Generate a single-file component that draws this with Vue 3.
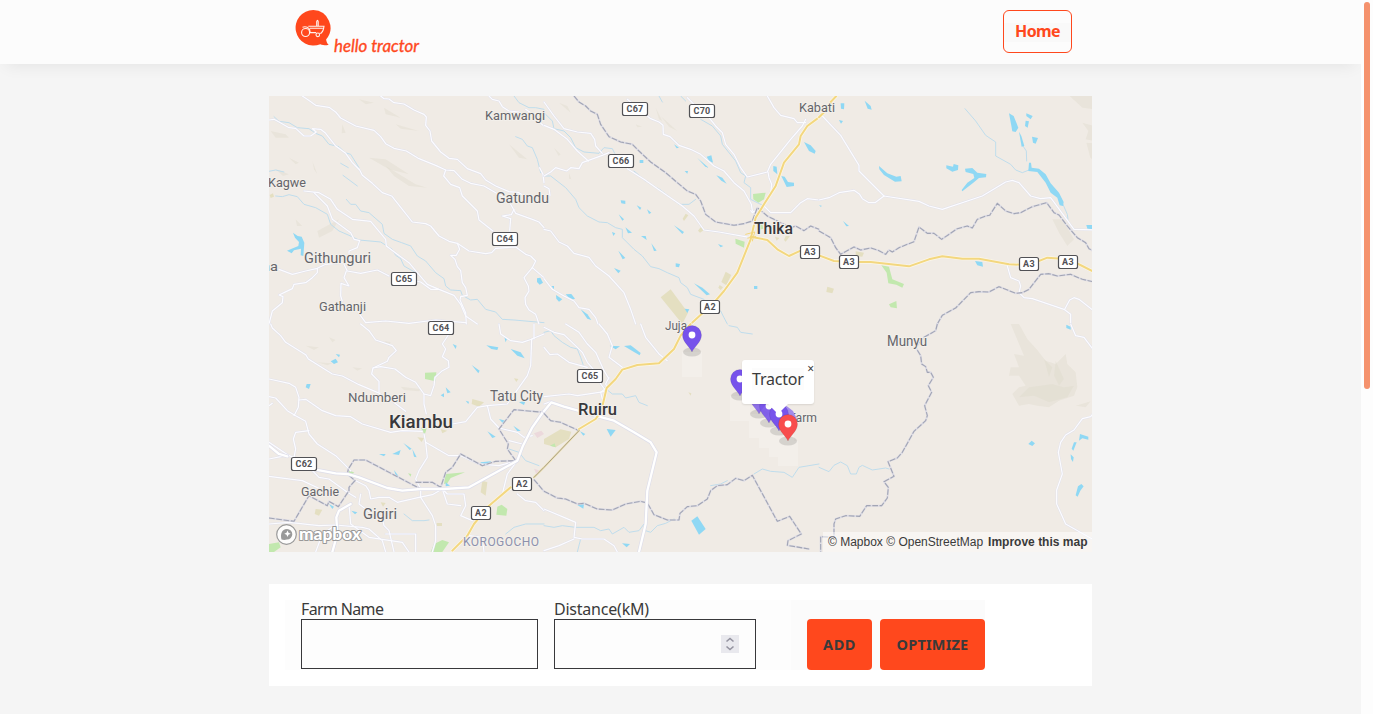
<script setup>
import { ref } from 'vue'

const farm = ref('')
const distance = ref('')

// The map is divided into six tiles; coordinates are local to each tile.
const tiles = [
  {
    x: 0, y: 0,
    roads: [
      '100,0 118,12 140,28 180,34 200,48 215,66 260,90 315,103 335,122 350,143 375,157 412,165 450,188 500,208 530,222 555,224 580,250 605,262 645,270 680,290 720,310',
      '335,0 345,8 360,9 375,20 405,24 435,42 465,55 472,63 470,88 483,105 488,135 515,168 540,187 565,190 595,218 635,233 650,252 680,270 720,287 750,290 765,300',
      '0,72 15,70 30,78 60,95 80,97 105,120 125,120 142,108 130,98 155,100 170,112 200,150 230,172 250,200 272,222 280,238 310,262 340,290 368,300 400,340 430,378 470,383 485,390 510,420 540,436 565,442 600,465 650,473 668,470 680,457 740,453 770,475 785,480 800,495',
      '530,222 524,240 545,265 572,275 580,300 625,345 630,372 672,405',
      '105,285 150,290 185,310 205,340 250,370 305,376 325,400 350,430 352,450 385,475 420,500 445,530 475,565 510,580 555,598 575,625 590,660 625,684',
      '135,290 175,330 190,370 245,410 255,430 272,434 265,455 240,465 240,472',
      '30,520 70,535 110,525 145,517 170,505 225,500', '225,505 235,525 275,532 325,522 360,540',
      '440,555 455,558 485,580 510,580', '232,525 225,545 240,570 216,562 215,600 220,615',
      '145,517 145,530 130,545 110,560 75,565 70,578 45,590 30,597 42,602 40,620 10,645 0,684',
      '268,650 290,680 350,675 420,682 500,672 590,680',
      '565,442 572,460 562,478 545,478 558,490 565,512 575,524 580,560 590,575 595,598 575,602 573,612 590,650 592,684',
      '725,325 740,352 790,370 810,378 825,395', '725,368 700,360 727,356 735,340', '725,368 722,405',
      '800,495 790,515 765,545 778,570 780,585 768,605 770,625 780,642 800,655 810,684', '790,515 825,545',
      '660,0 670,10 690,15 700,32 720,45 750,48', '770,40 800,60 810,78 825,90', '812,215 822,235 825,260'
    ],
    streams: [
      '15,62 30,76 60,80 85,95 120,98 140,112 160,120 180,145 210,152 228,170 245,175 270,215', '0,226 20,222 45,228', '215,202 238,215', '222,238 265,270',
      '20,300 40,302 60,296 85,302 105,325 140,335 175,355 185,385 210,405 240,418 270,432 335,438 370,460 380,478 395,488 405,510 440,530',
      '232,310 245,325 260,325 275,345 300,350 340,385 345,412 370,430 398,440 425,450 445,480 470,495 500,530 525,548 530,570 545,582 575,584 580,598 605,612 625,610 650,640 680,648 700,670 735,672 825,680',
      '740,122 760,130 775,150 790,155 805,190 815,230', '735,0 750,20 780,35 800,35 825,40'
    ],
    borders: [], yellow: [], trunk: [],
    water: ['72,410 86,420 98,422 106,440 103,480 95,478 96,458 75,463 68,472 54,464 68,458 88,450 90,438 78,425', '804,547 814,545 822,560 812,566 804,558'],
    green: [], sand: ['2,297 12,292 15,302 5,306'],
    hills: ['5,105 50,115 60,125 20,125', '20,220 60,235 42,240', '130,195 145,235 135,220', '300,185 350,190 420,235 360,220', '350,210 440,265 475,275 420,270 375,240', '345,35 395,65 350,55', '380,85 450,105 395,98', '720,145 775,190 750,185', '145,405 210,370 190,405 150,425', '220,85 230,110 218,112', '270,10 315,20 290,25', '60,185 90,200 80,205', '80,370 100,390 84,390']
  },
  {
    x: 825, y: 0,
    roads: [
      '0,18 30,60 60,98 100,108 140,112 152,130 155,150 175,172', '0,88 30,100 70,130 100,165 133,195', '0,240 20,228 35,215 68,225 80,215 105,218 115,200 175,178 195,170', '0,270 15,278 18,298',
      '250,10 280,35 320,68 345,78 357,88 358,115 378,122 405,148 440,160 470,175 510,210 540,225 570,260 600,285 622,325 625,344 635,350',
      '430,5 450,25', '495,65 515,90 535,110 545,145 570,175 590,215 610,243 670,228 680,205 740,130 775,90 785,70', '670,0 690,35 710,58 750,68 760,80 785,80', '672,228 675,245 683,265 680,290',
      '250,218 300,250 350,285 415,330 450,360 480,402 525,408 620,425', '660,330 680,350 740,350 770,320 790,308 825,312',
      '0,400 20,405 45,438 70,450 90,472 135,484 155,510 195,540 240,590 260,640 275,684', '0,548 25,580 60,600 90,615 105,635 135,640 155,665 162,684', '640,340 625,350 620,344'
    ],
    streams: ['0,50 25,75 30,98 60,105 80,125 95,155 120,168 165,172 180,155 205,158 212,172', '0,240 20,240 65,275 95,310 105,335 130,360 165,378 190,380 215,395 235,400 235,425 270,460 295,480 320,512 345,518 370,530 405,545 410,560 430,575 440,595 480,610', '410,0 425,15', '470,70 505,90 530,120 535,145 575,195 590,230 605,240 600,260 620,275 620,310 660,330', '270,225 305,255 350,282 405,325 435,325 455,310', '530,645 540,665 550,684', '345,0 355,18'],
    borders: ['90,0 105,18 125,30 140,45 160,55 170,85 195,122 230,138 265,145 285,165 320,198 365,230 400,260 430,285 455,295 470,315 485,355 515,378 570,388 600,383 625,375 640,335 670,360 690,370 740,395 755,390 780,404 800,390 825,400'],
    yellow: ['825,64 790,90 770,120 765,145 720,200 695,270 660,325 635,365 620,430 580,530 540,585 505,625 440,684', '620,422 670,432 700,460 735,480 770,464'], trunk: [],
    water: ['390,145 405,155 398,157', '488,182 502,178 507,200 495,195', '460,186 494,215 484,212', '517,238 535,245 548,263 532,254', '422,225 432,225 430,233', '287,192 298,192 298,201 287,201', '780,138 800,148 815,165 812,173 795,165', '688,210 698,212 700,235 688,225', '712,240 722,242 732,258 750,260 750,270 728,273', '762,275 780,283', '788,292 800,298', '230,313 244,314 244,324 232,322', '278,328 292,335 288,342', '309,340 322,350 315,354', '224,355 240,370 235,374', '244,394 264,410 252,412', '291,420 305,420 308,432', '322,442 338,464 330,465', '390,388 420,408 415,414', '204,408 214,412 208,420', '223,464 244,486 236,490', '210,516 230,524 223,532', '395,502 408,504 405,514 395,512', '522,444 538,450 530,454', '450,562 475,575 498,595 488,598', '630,570 640,570 640,579 630,579', '65,595 82,594 93,608 80,612', '36,597 55,610 45,617 37,608', '110,640 130,655 142,672 130,668', '22,570 30,570 30,580', '422,638 436,640 430,651'],
    green: ['627,294 665,290 660,310 643,320 628,310', '574,428 602,437 600,455 575,443', '640,380 655,384 658,398 642,402'],
    sand: ['380,580 432,650 415,684 350,604', '545,527 562,537 547,568 532,558', '425,353 433,358 420,375 416,368', '470,394 480,402 468,410 462,404', '725,420 738,420 725,437 720,432', '693,422 706,426 698,434', '527,567 537,574 530,582 523,575'],
    hills: ['45,20 70,30 80,50', '335,35 355,75 345,70', '350,60 400,105 375,92', '30,155 50,175 44,180', '275,85 294,92 280,94', '75,230 82,250 75,248']
  },
  {
    x: 1650, y: 0,
    roads: ['10,60 65,118 120,208 120,225 195,300', '0,312 30,305 60,290 105,283 122,295 130,308 150,320 168,320 195,300 300,316 330,330 370,340 490,300 560,258 580,253 600,260 635,300 665,308 695,305 765,400 825,402', '565,510 575,545 600,555 605,570 600,590 615,605 640,608 735,640 755,655 755,684', '737,640 752,612 765,605 780,610 825,645'],
    streams: ['438,38 470,75 500,118 530,138 530,180 575,205 590,222 610,230 630,222', '612,150 622,165 623,195', '732,325 745,355 747,370'],
    borders: ['0,405 35,425 50,455 65,475 105,453 125,462 155,456 180,464 200,475 210,462 220,468 240,455 285,437 300,393 325,412 345,412 368,430 415,398 445,390 460,396 475,370 500,360 512,358 535,322 560,345 585,353 605,350 640,332 683,320 705,350 720,357 745,390 775,425 800,440 810,458 825,466', '355,684 370,658 410,636 455,590 480,587 510,588 540,572 590,592 610,590 630,580 665,535 690,533 715,540 755,535 790,550 825,558'],
    yellow: ['52,0 35,18 35,30 0,64', '0,478 45,495 100,498 155,498 270,511 330,490 370,481 430,488 480,488 570,505 630,507 685,485 750,490 790,510 820,525'], trunk: [],
    water: ['65,22 76,22 75,40 66,38', '137,14 155,30 158,41 146,38', '60,72 72,75 66,83', '180,210 205,232 232,242 245,240 248,256 228,257 195,237 181,220', '382,208 402,212 404,204 418,208 417,222 400,227 382,217', '438,218 460,216 475,230 502,234 501,244 480,246 463,260 430,286 428,282 445,260 466,246 463,234 440,228', '570,52 584,60 598,95 590,108 580,106', '600,107 607,120 616,150 608,152', '622,52 641,60 635,70 622,60', '620,74 630,76 626,95 618,90', '639,122 657,126 650,143 642,140', '630,200 636,200 638,215 660,218 680,235 695,262 720,290 734,318 732,330 722,328 715,305 695,290 680,260 655,228 628,225', '468,495 490,498 492,512 475,508', '72,375 90,390 82,391', '0,328 8,329 6,333', '802,387 825,387 825,400 805,398'],
    green: ['187,508 210,512 220,550 255,564 250,575 232,566 208,562 203,530', '210,625 232,615 234,637 215,634'], sand: ['110,466 135,470 130,482 110,480', '25,572 45,578 40,592 22,588'],
    hills: ['752,0 825,0 825,40 790,35', '790,80 825,90 825,135 800,130 808,105', '700,370 730,370 765,430 745,450 720,410', '802,140 825,142 825,195 814,185']
  },
  {
    x: 0, y: 684,
    roads: [
      '5,0 10,12 35,35 50,55 110,92 118,105 190,150 220,156 270,182 325,205 370,232 410,262', '275,0 300,20 320,48 370,65 382,80 360,100 355,112 312,132 308,150 330,172 330,205', '312,132 335,128 378,135 410,160 440,175 465,210 485,215 495,185 498,160 520,140 540,130 538,110 520,98 530,75 520,60 540,30',
      '465,210 465,240 472,270', '0,165 60,178 80,190 90,220 88,250 75,275', '90,228 110,226 160,260 200,275 245,278 280,300 365,325 400,320 460,322', '0,218 20,222 55,260 80,275 110,292 120,330 145,360 200,395 245,440', '0,245 10,238', '120,320 80,325 73,345 80,375 75,400', '0,355 60,395 90,405', '0,405 50,395', '465,330 470,355 475,400 450,440 440,465 455,495 455,520 490,575 500,605 500,650 490,684', '470,355 540,395 575,395 630,420 690,425 745,410',
      '550,300 590,293 625,250 655,245 715,240 750,190 775,155 785,125 788,45 825,30', '690,0 695,30 725,50 760,55 790,45', '795,0 795,45', '655,245 665,285 690,312 745,325 765,340 790,335',
      '0,457 100,470 175,505 210,510', '130,440 150,460 180,465 235,505 260,520', '260,470 290,485 300,500 305,525 330,520 360,520 385,535 450,520 490,512 520,495', '275,510 270,540 310,570 340,580 345,605 360,620 375,684', '520,495 535,510 585,510 590,545 575,575 610,590', '520,495 535,540 575,545', '745,410 715,450 700,510', '745,510 770,530 800,535 825,560', '0,600 60,595 150,605 200,603 280,610 300,615 340,650 350,684', '190,610 160,630 140,684', '350,630 440,630 440,684', '240,540 245,600 300,640 400,655 420,684', '600,635 640,640 645,684', '720,350 760,360'
    ],
    streams: ['405,570 430,590 465,590 480,588', '720,375 750,385 770,410 810,425', '710,630 735,610 770,600 825,600'],
    borders: ['0,582 75,592 120,515 175,545 180,532 208,548 240,500 240,490 258,470 235,450 238,435 255,408 290,408 455,495', '440,475 490,475 515,490 530,445 550,430 575,390 640,425 680,412 740,410 715,375 718,360 690,315 735,257 825,265', '795,467 825,502'],
    yellow: ['725,490 660,545 615,600 595,635 550,680'], trunk: ['0,365 30,390 55,397', '140,437 200,448 235,450 270,460 355,492 400,500 455,495 525,495 600,490 745,410 762,365 790,310 825,260', '245,540 210,560 202,580 205,630 190,684'],
    water: ['200,90 213,92 210,100', '185,112 200,104 207,115 195,120', '113,180 125,180 120,195 110,190', '551,60 563,65 560,75', '652,64 688,70 685,78 667,75', '725,75 755,85 767,103 745,95', '608,123 632,140 628,148', '530,190 545,205 535,208', '515,214 525,208 525,220', '590,230 600,233 598,240', '750,235 770,230 765,243', '655,322 680,338 670,342', '733,305 755,320 745,322', '690,285 710,290 700,296', '330,390 350,390 345,397', '370,390 395,378 390,393', '403,357 428,374 422,378', '430,375 443,400 435,398', '634,415 666,412 660,424 640,424', '375,438 388,455 382,460', '530,475 543,485 530,487', '180,540 195,548 190,555', '247,560 265,565 258,571', '780,193 790,200', '705,35 715,42 710,55'],
    green: ['468,146 502,145 500,172 468,165', '455,310 473,313 467,333', '530,450 588,445 545,462 535,478 525,480', '685,548 698,542 715,555 712,575 682,572', '0,660 30,655 35,670 15,684 0,684', '495,660 520,648 540,655 520,684 485,684', '417,448 427,450 425,458', '240,438 256,446 250,450 240,446'],
    sand: ['610,225 645,235 630,248 608,240', '445,340 465,342 458,354', '640,470 655,475 650,515 635,505', '515,315 535,320 520,328', '140,555 160,557 150,575 137,570', '503,597 519,597 519,606 503,606', '335,535 350,537 342,548', '735,163 748,165 742,174'],
    hills: ['110,65 150,70 135,78', '145,115 190,118 175,124', '395,188 455,195 450,202 405,198', '250,130 280,133 265,140', '180,40 200,48 190,55', '345,50 365,55 360,65']
  },
  {
    x: 825, y: 684,
    roads: ['0,10 30,25 60,32 100,70 115,85 130,115 160,150 170,180 185,200', '0,70 18,92 40,90 75,115 130,130', '65,0 105,25 130,60 155,85 180,140 195,165', '165,0 190,30 205,65 195,100 235,130', '290,0 305,40 345,90 370,110', '0,218 75,210 100,215 180,203', '195,160 185,180 190,190 170,205 175,225', '0,555 60,580 95,595 90,640 115,645 180,645 210,665 220,684', '90,645 45,665 0,680', '0,240 22,232'],
    streams: ['0,25 20,20 30,35 55,55 80,70 100,75 110,100 120,130', '0,605 30,610 55,605 95,610 150,610 170,620 195,615 205,630 240,610 255,625 285,620 300,600 305,620 320,625 340,605 365,598 390,585', '180,190 205,210 235,210 245,222 275,215 285,235 310,245', '630,450 655,435 680,442 720,445 745,460 765,430 795,425 825,420', '555,5 580,10 590,25 625,30', '110,645 100,684', '500,485 530,480 550,470'],
    borders: ['0,268 20,290 50,295 105,320', '0,502 40,522 65,525 100,540 120,538 160,555 205,558 245,540 290,532 310,537 330,572 370,588 405,588 408,568 430,548 460,545 490,525 500,500 520,485 550,482 575,463 600,470 625,454 700,592 737,577 772,630 732,650 730,664 795,675'],
    yellow: ['440,0 410,35 390,75 345,118 280,123 235,137 215,165 188,192 172,260 155,285 105,315'], trunk: ['0,262 22,235 60,248 110,262 165,278 210,290 270,325 320,355 338,385 310,500 305,600 285,684'],
    water: ['197,65 228,67 215,76', '240,66 260,64 290,87 287,94 270,84', '188,315 215,318 200,338', '108,322 124,330 118,335', '442,590 460,577 485,615 465,632', '234,658 258,660 248,670', '100,543 120,540 118,554'],
    green: ['18,365 32,358 35,370'], sand: ['0,345 50,316 82,323 75,345 35,370 0,360', '433,205 442,208 440,215'], hills: []
  },
  {
    x: 1650, y: 684,
    roads: ['755,0 770,35 795,40 825,80', '825,265 815,278 790,284 765,318 740,333 725,355 718,385 730,450 713,498 713,540 740,600 825,648'],
    streams: ['0,430 30,443 45,424 65,414 85,425 95,450 112,450 120,430 130,424 160,438 200,432 210,435'],
    borders: ['355,0 350,20 315,40 290,70 305,95 308,120 320,128 325,145 335,145 343,160 328,185 338,205 317,245 325,275 320,290 285,322 250,385 235,402 207,413 225,457 195,473 208,490 205,522 188,545 143,545 122,577 80,575 50,585 45,600 45,640 5,638 5,684'],
    yellow: [], trunk: [],
    water: ['742,2 755,8 755,17 742,12', '628,360 638,350 648,358 640,366', '783,330 808,338 808,347 790,343 780,350', '765,355 773,355 763,380 758,374', '755,391 764,400 762,414 756,405', '777,487 787,480 794,487 784,500 776,518 770,514'],
    green: [], sand: [],
    hills: ['575,0 600,0 625,45 655,78 680,110 710,120 740,90 745,120 770,145 775,190 765,215 720,230 690,250 655,245 630,240 600,245 580,210 600,190 620,185 600,155 570,155 575,130 600,130 585,90 615,95', '630,190 700,180 735,190 765,185 745,220 690,235 645,215 600,220', '675,105 700,130 690,160', '710,110 735,165 720,185 705,155', '770,245 815,232 800,250']
  }
]

// [text, left x, baseline y, width, size, weight]
const labels = [
  ['Kagwe', -1, 91, 38, 13, 400], ['Kamwangi', 216, 24, 60, 13, 400], ['Gatundu', 227, 107, 53, 14, 400],
  ['Githunguri', 35, 167, 67, 14.5, 400], ['na', -7, 175, 16, 13, 400], ['Gathanji', 50, 215, 47, 13, 400],
  ['Kabati', 530, 16, 36, 13, 400], ['Thika', 485, 138, 39, 16, 500], ['Juja', 396, 234, 22, 12.5, 400],
  ['Munyu', 618, 250, 40, 14, 400], ['Ndumberi', 79, 306, 58, 13, 400], ['Kiambu', 120, 332, 64, 19, 500],
  ['Tatu City', 221, 305, 53, 14, 400], ['Ruiru', 309, 319, 39, 16.5, 500], ['Farm', 520, 326, 28, 12.5, 400],
  ['Gachie', 32, 400, 38, 13, 400], ['Gigiri', 94, 423, 34, 14, 400]
]
// [code, centre x, centre y]
const shields = [
  ['C67', 366, 13], ['C70', 433, 15], ['C66', 352, 65], ['C64', 236, 143], ['C65', 135, 183], ['C64', 172, 232],
  ['A3', 541, 156], ['A3', 580, 166], ['A3', 760, 168], ['A3', 799, 166], ['A2', 441, 211], ['C65', 321, 280],
  ['C62', 35, 368], ['A2', 253, 388], ['A2', 212, 417]
]
// [tip x, tip y, fill, opacity]
const pins = [
  [423, 256, '#7753eb', 1], [471, 300, '#7753eb', 1], [490, 318, '#7753eb', .8],
  [500, 327, '#7753eb', .9], [510, 335, '#7753eb', 1], [519, 345, '#f84d4d', 1]
]
</script>

<template>
  <div class="page">
    <div class="content">
      <header>
        <div class="bar">
          <svg class="logo" width="128" height="48" viewBox="0 0 128 48">
            <path d="M18.300 2a17.800 17.800 0 1 0 7 34.200c2 .8 5 1.100 8.400.9-1.700-2-2.400-4-2.600-5.700A17.800 17.800 0 0 0 18.300 2Z" fill="#ff481d" />
            <g fill="none" stroke="#fff3ee" stroke-width="1.100">
              <circle cx="10.600" cy="24.500" r="4" /><circle cx="22.800" cy="26.800" r="1.800" />
              <path d="M7.500 19.200q4-1.500 7 1.800l.7 3.600h6M13.300 18.200h15.700q-.6 5-2.800 7h-1.600M15 20.200h12.800M21.700 18v-4.300q.8-3 1.500 0V18" />
            </g>
            <text x="39" y="44" textLength="85" lengthAdjust="spacingAndGlyphs">hello tractor</text>
          </svg>
          <a class="home">Home</a>
        </div>
      </header>
      <main>
        <section class="map">
          <svg width="823" height="456" viewBox="0 0 823 456">
            <defs>
              <filter id="soft" color-interpolation-filters="sRGB"><feGaussianBlur stdDeviation="2" /></filter>
            </defs>
            <rect width="823" height="456" fill="#f0ebe5" />
            <g transform="scale(.33333)">
              <g v-for="t in tiles" :key="'area' + t.x + t.y" :transform="`translate(${t.x} ${t.y})`">
                <polygon v-for="p in t.hills" :key="p" :points="p" class="hill" />
                <polygon v-for="p in t.sand" :key="p" :points="p" class="sand" />
                <polygon v-for="p in t.green" :key="p" :points="p" class="green" />
                <polyline v-for="p in t.streams" :key="p" :points="p" class="stream" />
                <polygon v-for="p in t.water" :key="p" :points="p" class="water" />
              </g>
              <g v-for="t in tiles" :key="'line' + t.x + t.y" :transform="`translate(${t.x} ${t.y})`">
                <polyline v-for="p in t.roads" :key="'c' + p" :points="p" class="case" />
                <polyline v-for="p in t.roads" :key="p" :points="p" class="road" />
                <polyline v-for="p in t.borders" :key="'c' + p" :points="p" class="border-case" />
                <polyline v-for="p in t.borders" :key="p" :points="p" class="border" />
                <polyline v-for="p in t.trunk" :key="'c' + p" :points="p" class="trunk-case" />
                <polyline v-for="p in t.trunk" :key="p" :points="p" class="trunk" />
                <polyline v-for="p in t.yellow" :key="'c' + p" :points="p" class="yellow-case" />
                <polyline v-for="p in t.yellow" :key="p" :points="p" class="yellow" />
              </g>
              <path d="M1430 415 1457 408 1450 435M1436 426 1460 422" class="town-road" />
              <path d="M930 1004 825 1114 795 1144" class="rail-case" />
              <path d="M930 1004 825 1114 795 1144" class="rail" />
              <path d="M795 1012l22-8 8 10-20 12zM795 1118l15 5-8 12z" fill="#ecd9dc" />
            </g>
            <g v-for="(s, i) in shields" :key="i" class="shield">
              <rect :x="s[1] - (s[0].length > 2 ? 12.5 : 9.5)" :y="s[2] - 6.5" :width="s[0].length > 2 ? 25 : 19" height="13" rx="2" />
              <text :x="s[1]" :y="s[2] + 3.3" text-anchor="middle">{{ s[0] }}</text>
            </g>
            <g class="places">
              <text v-for="l in labels" :key="l[0]" :x="l[1]" :y="l[2]" :textLength="l[3]" lengthAdjust="spacingAndGlyphs" :font-size="l[4]" :font-weight="l[5]" :class="{ town: l[5] > 400 }">{{ l[0] }}</text>
              <text x="194" y="450" textLength="76" font-size="12" class="suburb">KOROGOCHO</text>
            </g>
            <g fill="#fff" opacity=".22">
              <rect x="413" y="256" width="20" height="25" /><rect x="461" y="300" width="20" height="25" />
              <rect x="480" y="318" width="25" height="24" /><rect x="490" y="327" width="30" height="25" />
              <rect x="500" y="336" width="25" height="25" /><rect x="509" y="345" width="20" height="25" />
            </g>
            <path d="M515 308 524 315 528 323 520 321 511 313Z" fill="#a28bea" />
            <g v-for="(p, i) in pins" :key="'pin' + i" :transform="`translate(${p[0]} ${p[1]})`">
              <ellipse cy="0" rx="9" ry="4.6" fill="#000" opacity=".12" />
              <g :opacity="p[3]">
                <path d="M0 0C-2-5-9.5-10-9.5-17a9.5 9.5 0 0 1 19 0C9.500-10 2-5 0 0Z" :fill="p[2]" stroke="#000" stroke-opacity=".12" stroke-width=".7" />
                <circle cy="-17" r="3.4" fill="#fff" />
              </g>
            </g>
            <g class="mapbox">
              <circle cx="17.500" cy="438.500" r="9.800" fill="#fff" fill-opacity=".85" stroke="#999" stroke-width="1.200" />
              <path d="M12.500 443.500c-1.300-5 0-10.500 5.500-10.500a5.300 5.300 0 0 1 0 10.600c-2 .5-4 .4-5.500-.1Z" fill="#999" />
              <path d="m18.500 434.500 1 2.200 2.200 1-2.200 1-1 2.200-1-2.200-2.200-1 2.200-1z" fill="#fff" />
              <text x="30" y="443.500" textLength="62" lengthAdjust="spacingAndGlyphs">mapbox</text>
            </g>
          </svg>
          <div class="popup"><span>Tractor</span><b>×</b></div>
          <div class="credit"><span>© Mapbox</span> <span>© OpenStreetMap</span><strong>Improve this map</strong></div>
        </section>
        <form class="panel" @submit.prevent>
          <div class="fields">
            <label class="name"><span>Farm Name</span><input v-model="farm" type="text" /></label>
            <label class="distance"><span>Distance(kM)</span>
              <div class="number"><input v-model="distance" type="text" />
                <i class="spin"><svg width="18" height="18" viewBox="0 0 18 18"><path d="m5.500 6.500 3.500-3 3.500 3M5.500 11.500l3.500 3 3.500-3" /></svg></i>
              </div>
            </label>
          </div>
          <div class="actions"><button class="add">ADD</button><button class="optimize">OPTIMIZE</button></div>
        </form>
      </main>
    </div>
    <aside class="scroll"><div></div></aside>
  </div>
</template>

<style>
body { margin: 0; background: #f5f5f5; overflow: hidden; }
</style>

<style scoped>
* { box-sizing: border-box; }
.page { display: flex; height: 714px; overflow: hidden; font: 16px "Noto Sans", "Open Sans", sans-serif; color: #3a3a3a; }
.content { width: 1361px; overflow: hidden; background: #f5f5f5; }
header { height: 64px; background: #fcfcfc; box-shadow: 0 8px 15px -6px rgba(0, 0, 0, .07); }
.bar { width: 777px; margin-left: 295px; padding-top: 8px; display: flex; justify-content: space-between; }
.logo text { font: italic 400 17px "Lato", cursive; fill: #ff481d; stroke: #ff481d; stroke-width: .35px; }
.home { width: 69px; height: 43px; margin-top: 2px; border: 1px solid #ff481d; border-radius: 6px; color: #ff481d; font-weight: 700; line-height: 41px; text-align: center; letter-spacing: -.6px; background: linear-gradient(#fcfcfc 12px, #f9f9f9 12px 31px, #fcfcfc 31px); }
main { width: 823px; margin: 32px 0 0 269px; }
.map { position: relative; height: 456px; overflow: hidden; }
.map > svg { display: block; }
polyline, .rail, .rail-case, .town-road { fill: none; stroke-linejoin: round; stroke-linecap: round; }
.case { stroke: #e1e1ec; stroke-width: 6.200; }
.road { stroke: #fcfcff; stroke-width: 3.600; }
.stream { stroke: #bbdced; stroke-width: 2.800; }
.border-case { stroke: #dddce5; stroke-width: 6; }
.border { stroke: #a2a5b4; stroke-width: 3.300; stroke-dasharray: 17 5; stroke-linecap: butt; }
.trunk-case { stroke: #dedeea; stroke-width: 11; }
.trunk { stroke: #fff; stroke-width: 7; }
.yellow-case { stroke: #fcf7e8; stroke-width: 10; }
.yellow { stroke: #f3d77f; stroke-width: 6; }
.town-road { stroke: #f3d77f; stroke-width: 3; }
.rail-case { stroke: #efe0ab; stroke-width: 6; }
.rail { stroke: #a6a08f; stroke-width: 3; }
.water { fill: #8fd8f4; }
.green { fill: #c2e8ae; }
.sand { fill: #e4dfc1; }
.hill { fill: #dedacb; opacity: .38; filter: url(#soft); }
.shield rect { fill: #fff; stroke: #515155; stroke-width: 1.200; }
.shield text { font: 700 9px Roboto, sans-serif; fill: #515155; letter-spacing: .3px; }
.places text { font-family: Roboto, sans-serif; fill: #65656a; paint-order: stroke; stroke: #f3f0eb; stroke-width: 2px; stroke-linejoin: round; }
.places .town { fill: #38383b; }
.places .suburb { fill: #8d91ad; }
.mapbox text { font: 900 17px Lato, sans-serif; fill: #fff; stroke: #999; stroke-width: 2px; paint-order: stroke; stroke-linejoin: round; }
.popup { position: absolute; left: 473px; top: 264px; width: 72px; height: 44px; padding: 8px 10px; background: #fff; border-radius: 3px; line-height: 22px; box-shadow: 0 1px 2px rgba(0, 0, 0, .1); }
.popup span { display: block; width: 52px; background: #fcfcfc; letter-spacing: -.2px; white-space: nowrap; }
.popup::after { content: ""; position: absolute; left: 26px; top: 44px; border: 10px solid transparent; border-top-color: #fff; border-bottom: 0; }
.popup b { position: absolute; right: 0; top: 3px; font: 12px/12px "Noto Sans", sans-serif; }
.credit { position: absolute; right: 0; bottom: 0; width: 269px; height: 20px; padding: 0 5px; background: rgba(255, 255, 255, .5); font: 12px/20px "Liberation Sans", sans-serif; white-space: nowrap; }
.credit strong { margin-left: 5px; }
.panel { display: flex; height: 102px; margin-top: 32px; padding: 16px; background: #fff; }
.fields { display: flex; width: 506px; height: 70px; padding-left: 16px; background: #fdfdfd; }
label > span { display: block; height: 19px; line-height: 19px; }
.name > span { letter-spacing: -.65px; }
.distance > span { letter-spacing: -.22px; }
.name { width: 237px; }
.distance { width: 202px; margin-left: 16px; }
input { display: block; width: 100%; height: 50px; padding: 8px; border: 1px solid #38383b; background: #fdfdfd; font: inherit; outline: none; }
.number { position: relative; }
.spin { position: absolute; right: 17px; top: 16px; width: 18px; height: 18px; background: #e9e9ee; }
.spin svg { display: block; }
.spin path { fill: none; stroke: #9493a0; stroke-width: 1.600; }
.actions { display: flex; gap: 8px; height: 70px; padding: 19px 0 0 16px; background: #fbfbfb; }
button { height: 51px; padding: 0 0 2px; border: 0; border-radius: 4px; background: #ff481d; color: #3a3a3a; font: 700 14.500px "Noto Sans", sans-serif; letter-spacing: .2px; }
.add { width: 65px; letter-spacing: .5px; }
.optimize { width: 105px; }
.scroll { width: 12px; background: #fdfdfd; padding: 2px 3px; }
.scroll div { width: 6px; height: 387px; border-radius: 3px; background: #f5926d; }
</style>
